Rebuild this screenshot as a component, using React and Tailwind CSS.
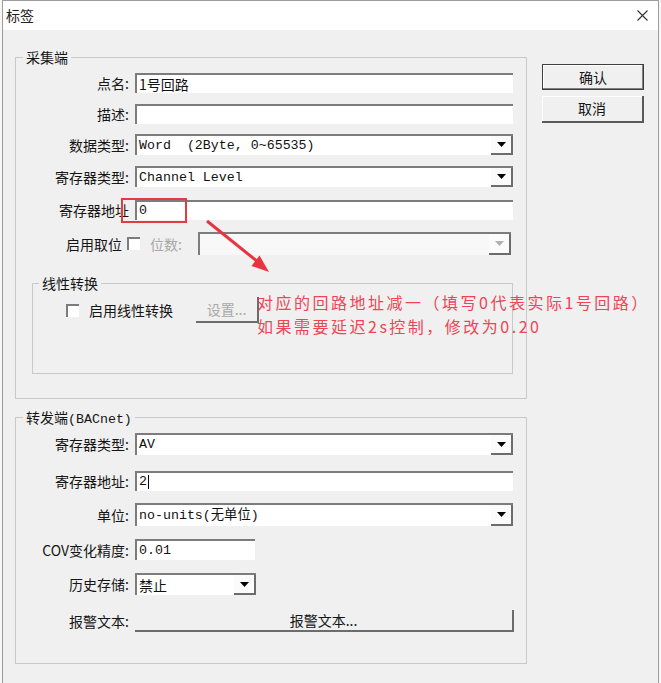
import React from "react";

const CJK = "font-['Noto_Sans_CJK_SC','Noto_Sans',sans-serif]";
const MONO = "font-['Liberation_Mono','Noto_Sans_CJK_SC',monospace]";

function Arrow({ disabled }) {
  return (
    <svg width="9" height="5" viewBox="0 0 9 5">
      <polygon points="0,0 9,0 4.5,5" fill={disabled ? "#b0b0b0" : "#000"} />
    </svg>
  );
}

function Select({ value, w, h, disabled }) {
  return (
    <div
      className={`flex ${w} ${h} border-t-2 border-l-2 border-t-[#7c7c7c] border-l-[#7c7c7c] ${
        disabled ? "bg-[#f8f8f8]" : "bg-white"
      }`}
    >
      <div className={`flex-1 flex items-center pl-[2px] whitespace-pre text-[13.3px] text-[#111] ${MONO}`}>{value}</div>
      <div className="w-[22px] flex items-center justify-center border-r-2 border-b-2 border-r-[#6c6c6c] border-b-[#6c6c6c] bg-[#fbfbfb]">
        <Arrow disabled={disabled} />
      </div>
    </div>
  );
}

function Input({ value, w, h, mono = true, caret }) {
  return (
    <div
      className={`flex items-center ${w} ${h} bg-white border-t-2 border-l-2 border-t-[#7c7c7c] border-l-[#7c7c7c] pl-[2px] text-[#111] ${
        mono ? `text-[13.3px] ${MONO}` : `text-[14px] ${CJK}`
      }`}
    >
      {value}
      {caret && <span className="w-px h-[14px] bg-black ml-[1px]" />}
    </div>
  );
}

function Check() {
  return <div className="w-[13px] h-[13px] bg-white border-t-2 border-l-2 border-t-[#7c7c7c] border-l-[#7c7c7c]" />;
}

function Row({ label, mt, h, children }) {
  return (
    <div className={`flex items-center ${mt} ${h}`}>
      <div className={`w-[113px] text-right text-[14px] leading-none text-[#151515] ${CJK}`}>{label}</div>
      <div className="ml-[6px] h-full flex items-center">{children}</div>
    </div>
  );
}

function Legend({ children, left, font }) {
  return (
    <div className={`absolute -top-[11px] ${left} px-[3px] bg-[#f0f0f0] text-[14px] leading-[20px] text-[#151515] ${font}`}>
      {children}
    </div>
  );
}

export default function App() {
  return (
    <div className="relative w-[661px] h-[683px] bg-[#f7f7f7] overflow-hidden">
      <div className="ml-[2px] w-[657px] h-[683px] border-l border-r border-t border-[#9c9c9c] bg-[#f0f0f0] flex flex-col">
        {/* title bar */}
        <div className="h-[29px] bg-white flex items-center justify-between pl-[3px] pr-[10px]">
          <span className={`text-[14px] text-[#222] ${CJK}`}>标签</span>
          <svg width="11" height="11" viewBox="0 0 11 11">
            <path d="M0.5 0.5 L10.5 10.5 M10.5 0.5 L0.5 10.5" stroke="#333" strokeWidth="1.1" />
          </svg>
        </div>

        <div className="flex pl-[12px] mt-[27px]">
          {/* left column */}
          <div className="w-[512px] flex flex-col">
            {/* group 1 */}
            <div className="relative w-[512px] h-[342px] border border-[#c9c9c9] flex flex-col">
              <Legend left="left-[7px]" font={CJK}>采集端</Legend>
              <Row label="点名:" mt="mt-[15px]" h="h-[20px]">
                <Input value="1号回路" w="w-[378px]" h="h-[20px]" mono={false} />
              </Row>
              <Row label="描述:" mt="mt-[11px]" h="h-[20px]">
                <Input value="" w="w-[378px]" h="h-[20px]" />
              </Row>
              <Row label="数据类型:" mt="mt-[10px]" h="h-[21px]">
                <Select value="Word  (2Byte, 0~65535)" w="w-[378px]" h="h-[21px]" />
              </Row>
              <Row label="寄存器类型:" mt="mt-[11px]" h="h-[21px]">
                <Select value="Channel Level" w="w-[378px]" h="h-[21px]" />
              </Row>
              <Row label="寄存器地址" mt="mt-[13px]" h="h-[20px]">
                <Input value="0" w="w-[378px]" h="h-[20px]" />
              </Row>
              <div className="flex items-center mt-[12px] h-[23px]">
                <div className={`w-[106px] text-right text-[14px] leading-none text-[#151515] ${CJK}`}>启用取位</div>
                <div className="ml-[5px]">
                  <Check />
                </div>
                <div className={`ml-[10px] w-[48px] text-[14px] leading-none text-[#a8a8a8] ${CJK}`}>位数:</div>
                <Select value="" w="w-[313px]" h="h-[23px]" disabled />
              </div>

              {/* linear group */}
              <div className="relative ml-[16px] mt-[28px] w-[481px] h-[91px] border border-[#c9c9c9]">
                <Legend left="left-[6px]" font={CJK}>线性转换</Legend>
                <div className="flex items-center mt-[13px] h-[26px]">
                  <div className="ml-[33px]">
                    <Check />
                  </div>
                  <div className={`ml-[10px] w-[107px] text-[14px] leading-none text-[#151515] ${CJK}`}>启用线性转换</div>
                  <div
                    className={`w-[63px] h-[26px] flex items-center justify-center border-r-2 border-b-2 border-r-[#6c6c6c] border-b-[#6c6c6c] text-[14px] text-[#a8a8a8] ${CJK}`}
                  >
                    设置...
                  </div>
                </div>
              </div>
            </div>

            {/* group 2 */}
            <div className="relative mt-[18px] w-[512px] h-[247px] border border-[#c9c9c9] flex flex-col">
              <Legend left="left-[7px]" font={MONO}>
                <span className={CJK}>转发端</span>
                <span className="text-[13.3px]">(BACnet)</span>
              </Legend>
              <Row label="寄存器类型:" mt="mt-[15px]" h="h-[22px]">
                <Select value="AV" w="w-[378px]" h="h-[22px]" />
              </Row>
              <Row label="寄存器地址:" mt="mt-[16px]" h="h-[20px]">
                <Input value="2" w="w-[378px]" h="h-[20px]" caret />
              </Row>
              <Row label="单位:" mt="mt-[12px]" h="h-[23px]">
                <Select value="no-units(无单位)" w="w-[378px]" h="h-[23px]" />
              </Row>
              <Row label="COV变化精度:" mt="mt-[13px]" h="h-[21px]">
                <Input value="0.01" w="w-[120px]" h="h-[21px]" />
              </Row>
              <Row label="历史存储:" mt="mt-[13px]" h="h-[22px]">
                <Select value={<span className={`text-[14px] ${CJK}`}>禁止</span>} w="w-[121px]" h="h-[22px]" />
              </Row>
              <Row label="报警文本:" mt="mt-[15px]" h="h-[22px]">
                <div
                  className={`w-[379px] h-[22px] flex items-center justify-center border-r-2 border-b-2 border-r-[#6c6c6c] border-b-[#6c6c6c] text-[14px] text-[#151515] ${CJK}`}
                >
                  报警文本...
                </div>
              </Row>
            </div>
          </div>

          {/* right column */}
          <div className="ml-[15px] mt-[7px] w-[102px] flex flex-col">
            <div
              className={`h-[26px] flex items-center justify-center border border-[#3f3f3f] shadow-[inset_-1px_-1px_0_#808080,inset_1px_1px_0_#ffffff] text-[14px] text-[#151515] ${CJK}`}
            >
              确认
            </div>
            <div
              className={`mt-[6px] h-[27px] flex items-center justify-center border-r-2 border-b-2 border-r-[#5a5a5a] border-b-[#5a5a5a] shadow-[inset_1px_1px_0_#ffffff] text-[14px] text-[#151515] ${CJK}`}
            >
              取消
            </div>
          </div>
        </div>
      </div>

      {/* annotations */}
      <div className="absolute left-[121px] top-[198px] w-[66px] h-[25px] border-2 border-[#e63946]" />
      <svg className="absolute left-0 top-0 pointer-events-none" width="661" height="683">
        <line x1="207" y1="221" x2="258" y2="262" stroke="#ea3340" strokeWidth="3" />
        <polygon points="269,272 251.5,266 259.5,255.5" fill="#ea3340" />
      </svg>
      <div className={`absolute left-[257px] top-[290px] text-[16px] leading-[24px] tracking-[2.5px] text-[#ef4456] ${CJK}`}>
        <div>对应的回路地址减一（填写0代表实际1号回路）</div>
        <div>如果需要延迟2s控制，修改为0.20</div>
      </div>
    </div>
  );
}
